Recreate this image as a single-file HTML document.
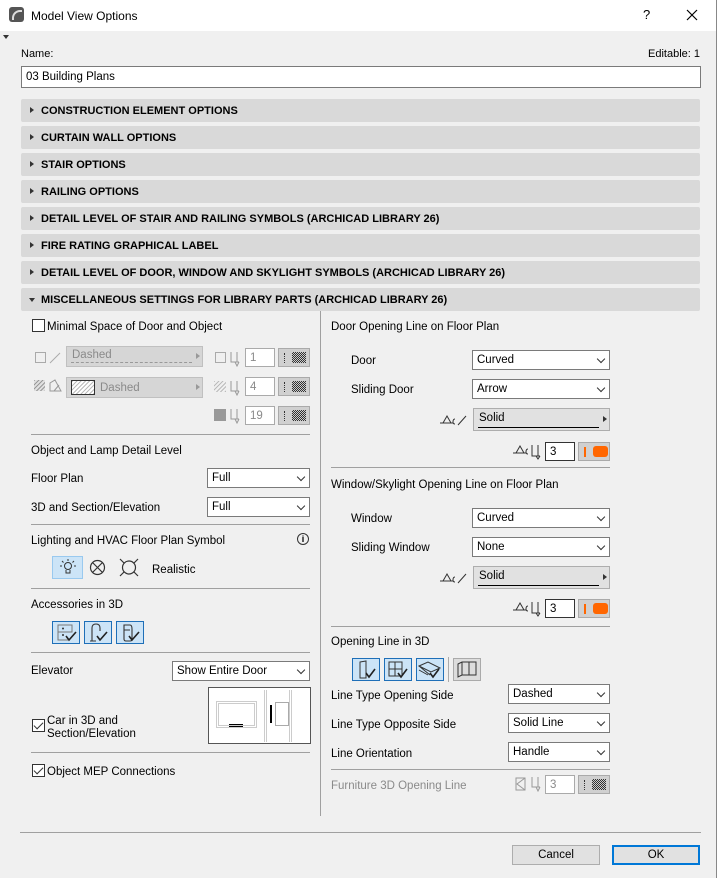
<!DOCTYPE html>
<html><head><meta charset="utf-8"><style>
*{box-sizing:border-box;margin:0;padding:0}
body{width:717px;height:878px;background:#f0f0f0;font-family:"Liberation Sans",sans-serif;font-size:11.5px;color:#000;position:relative;overflow:hidden}
.a{position:absolute}
.t{position:absolute;white-space:nowrap;line-height:14px}
.hdr{position:absolute;left:21px;width:679px;height:23px;background:#d9d9d9;border-radius:2px;font-weight:bold;font-size:11px;line-height:24px;padding-left:20px}
.hdr:before{content:"";position:absolute;left:9px;top:8px;border-left:4px solid #333;border-top:3.5px solid transparent;border-bottom:3.5px solid transparent}
.hdr.open:before{left:8px;top:10px;border-top:4px solid #333;border-left:3.5px solid transparent;border-right:3.5px solid transparent;border-bottom:none}
.dd{position:absolute;background:#fff;border:1px solid #7a7a7a;height:20px;line-height:19px;padding-left:4px}
.dd:after{content:"";position:absolute;right:5px;top:5px;width:5px;height:5px;border-right:1px solid #333;border-bottom:1px solid #333;transform:rotate(45deg)}
.hl{position:absolute;height:1px;background:#a0a0a0}
.inp{position:absolute;background:#fff;border:1px solid #aaa;height:19px;line-height:18px;padding-left:4px}
.sw{position:absolute;width:32px;height:19px;background:#d0d0d0;border:1px solid #aaa}
.sw i{position:absolute;left:13px;top:3px;width:14px;height:11px;background:repeating-conic-gradient(#333 0 25%,#ccc 0 50%) 0 0/2px 2px}
.sw b{position:absolute;left:5px;top:4px;width:1px;height:10px;border-left:1px dotted #333}
.swo i{background:#f60;border-radius:3px;left:14px;top:3px;width:15px;height:11px}
.swo b{border-left:2px solid #f60;left:5px}
.cb{position:absolute;width:13px;height:13px;border:1px solid #333;background:#fff}
.cb.on:after{content:"";position:absolute;left:3px;top:0px;width:4px;height:8px;border-right:1.5px solid #333;border-bottom:1.5px solid #333;transform:rotate(45deg)}
.ib{position:absolute;width:29px;height:23px;border:1px solid #1e6fb8;background:#cce4f7}
.gray{color:#8a8a8a}
.btn{position:absolute;height:20px;background:#e1e1e1;border:1px solid #adadad;text-align:center;line-height:18px}
svg{position:absolute}
</style></head><body>
<div class="a" style="left:0;top:0;width:717px;height:31px;background:#fff"></div>
<div class="a" style="left:9px;top:7px;width:15px;height:15px;background:#555;border-radius:3px"></div>
<div class="a" style="left:12px;top:10px;width:10px;height:10px;border:2px solid #ddd;border-right:none;border-bottom:none;border-radius:8px 0 0 0"></div>
<div class="t" style="left:31px;top:9px;font-size:12px">Model View Options</div>
<div class="t" style="left:643px;top:8px;font-size:13px">?</div>
<svg style="left:686px;top:9px" width="12" height="12"><path d="M1 1L11 11M11 1L1 11" stroke="#000" stroke-width="1.2"/></svg>
<div class="a" style="left:716px;top:0;width:1px;height:878px;background:#888"></div>
<div class="a" style="left:3px;top:35px;border-top:4px solid #333;border-left:3px solid transparent;border-right:3px solid transparent"></div>

<div class="t" style="left:21px;top:47px;font-size:11px">Name:</div>
<div class="t" style="left:648px;top:47px;font-size:11px">Editable: 1</div>
<div class="a" style="left:21px;top:66px;width:680px;height:22px;background:#fff;border:1px solid #7a7a7a;padding-left:4px;line-height:21px">03 Building Plans</div>

<div class="hdr" style="top:99px">CONSTRUCTION ELEMENT OPTIONS</div>
<div class="hdr" style="top:126px">CURTAIN WALL OPTIONS</div>
<div class="hdr" style="top:153px">STAIR OPTIONS</div>
<div class="hdr" style="top:180px">RAILING OPTIONS</div>
<div class="hdr" style="top:207px">DETAIL LEVEL OF STAIR AND RAILING SYMBOLS (ARCHICAD LIBRARY 26)</div>
<div class="hdr" style="top:234px">FIRE RATING GRAPHICAL LABEL</div>
<div class="hdr" style="top:261px">DETAIL LEVEL OF DOOR, WINDOW AND SKYLIGHT SYMBOLS (ARCHICAD LIBRARY 26)</div>
<div class="hdr open" style="top:288px">MISCELLANEOUS SETTINGS FOR LIBRARY PARTS (ARCHICAD LIBRARY 26)</div>

<!-- left column -->
<div class="cb" style="left:32px;top:319px"></div>
<div class="t" style="left:47px;top:320px">Minimal Space of Door and Object</div>
<div class="a" style="left:35px;top:352px;width:11px;height:11px;border:1px solid #aaa"></div>
<svg style="left:49px;top:352px" width="12" height="12"><path d="M1 11L11 1" stroke="#aaa"/></svg>
<div class="a" style="left:66px;top:346px;width:137px;height:21px;background:#d6d6d6;border:1px solid #c0c0c0;color:#8a8a8a;padding-left:5px;line-height:17px">Dashed<div class="a" style="left:4px;right:10px;top:15px;border-top:1px dashed #999"></div></div>
<div class="a" style="left:196px;top:353px;border-left:4px solid #999;border-top:3px solid transparent;border-bottom:3px solid transparent"></div>
<div class="a" style="left:215px;top:352px;width:11px;height:11px;border:1px solid #aaa"></div>
<svg style="left:229px;top:351px" width="12" height="16"><path d="M2 1V11H10M8 1V11M6 11L8 15L10 11" stroke="#999" fill="none"/></svg>
<div class="inp gray" style="left:245px;top:348px;width:30px">1</div>
<div class="sw" style="left:278px;top:348px"><b></b><i></i></div>

<div class="a" style="left:34px;top:380px;width:11px;height:11px;background:repeating-linear-gradient(135deg,#999 0 1px,#e0e0e0 1px 3px)"></div>
<svg style="left:49px;top:379px" width="13" height="13"><path d="M1 12V4L6 1L12 12ZM5 12L10 6" stroke="#999" fill="none"/></svg>
<div class="a" style="left:66px;top:377px;width:137px;height:21px;background:#d6d6d6;border:1px solid #c0c0c0;color:#8a8a8a;padding-left:33px;line-height:20px">Dashed</div>
<div class="a" style="left:71px;top:380px;width:24px;height:15px;border:1px solid #333;background:repeating-linear-gradient(135deg,#bbb 0 1px,#fff 1px 3px)"></div>
<div class="a" style="left:196px;top:384px;border-left:4px solid #999;border-top:3px solid transparent;border-bottom:3px solid transparent"></div>
<div class="a" style="left:214px;top:381px;width:12px;height:11px;background:repeating-linear-gradient(135deg,#bbb 0 1px,transparent 1px 3px)"></div>
<svg style="left:229px;top:380px" width="12" height="16"><path d="M2 1V11H10M8 1V11M6 11L8 15L10 11" stroke="#999" fill="none"/></svg>
<div class="inp gray" style="left:245px;top:377px;width:30px">4</div>
<div class="sw" style="left:278px;top:377px"><b></b><i></i></div>
<div class="a" style="left:214px;top:409px;width:12px;height:12px;background:#999"></div>
<svg style="left:229px;top:408px" width="12" height="16"><path d="M2 1V11H10M8 1V11M6 11L8 15L10 11" stroke="#999" fill="none"/></svg>
<div class="inp gray" style="left:245px;top:406px;width:30px">19</div>
<div class="sw" style="left:278px;top:406px"><b></b><i></i></div>
<div class="hl" style="left:31px;top:434px;width:279px"></div>

<div class="t" style="left:31px;top:444px">Object and Lamp Detail Level</div>
<div class="t" style="left:31px;top:472px">Floor Plan</div>
<div class="dd" style="left:207px;top:468px;width:103px">Full</div>
<div class="t" style="left:31px;top:501px">3D and Section/Elevation</div>
<div class="dd" style="left:207px;top:497px;width:103px">Full</div>
<div class="hl" style="left:31px;top:524px;width:279px"></div>

<div class="t" style="left:31px;top:534px">Lighting and HVAC Floor Plan Symbol</div>
<div class="a" style="left:297px;top:533px;width:12px;height:12px;border:1px solid #333;border-radius:50%;font-size:9px;text-align:center;line-height:11px;font-weight:bold">i</div>
<div class="a" style="left:52px;top:556px;width:31px;height:23px;background:#cce4f7;border:1px solid #99c9ef"></div>
<svg style="left:59px;top:558px" width="18" height="18"><circle cx="9" cy="8" r="3.5" fill="none" stroke="#333"/><path d="M7 12V15H11V12M9 1V3M3 3L4.5 4.5M15 3L13.5 4.5M1 8H3M15 8H17" stroke="#333" fill="none"/></svg>
<svg style="left:89px;top:559px" width="17" height="17"><circle cx="8.5" cy="8.5" r="7" fill="none" stroke="#333" stroke-width="1.2"/><path d="M3.5 3.5L13.5 13.5M13.5 3.5L3.5 13.5" stroke="#333" stroke-width="1.2"/></svg>
<svg style="left:119px;top:558px" width="20" height="19"><circle cx="10" cy="9.5" r="6.5" fill="none" stroke="#333" stroke-width="1.2"/><path d="M1 1L5 5M19 1L15 5M1 18L5 14M19 18L15 14" stroke="#333" stroke-width="1.2"/></svg>
<div class="t" style="left:152px;top:563px">Realistic</div>
<div class="hl" style="left:31px;top:588px;width:279px"></div>

<div class="t" style="left:31px;top:598px">Accessories in 3D</div>
<div class="ib" style="left:52px;top:621px;width:28px"></div>
<div class="ib" style="left:84px;top:621px;width:28px"></div>
<div class="ib" style="left:116px;top:621px;width:28px"></div>
<svg style="left:52px;top:621px" width="28" height="23"><path d="M6 4H20V11H6ZM6 11V19H16" stroke="#777" fill="none"/><circle cx="11" cy="7.5" r="1" fill="#333"/><circle cx="11" cy="14" r="1" fill="#333"/><path d="M14 15L17 19L24 11" stroke="#222" stroke-width="1.6" fill="none"/></svg>
<svg style="left:84px;top:621px" width="28" height="23"><path d="M8 20V7Q8 3 12 3Q16 3 16 7V10M6 20H12" stroke="#333" fill="none" stroke-width="1.1"/><path d="M13 15L16 19L23 11" stroke="#222" stroke-width="1.6" fill="none"/></svg>
<svg style="left:116px;top:621px" width="28" height="23"><path d="M8 4H14Q16 4 16 8V18Q16 20 14 20H10Q8 20 8 18ZM8 9H14" stroke="#333" fill="none" stroke-width="1.1"/><path d="M13 15L16 19L23 11" stroke="#222" stroke-width="1.6" fill="none"/></svg>
<div class="hl" style="left:31px;top:652px;width:279px"></div>

<div class="t" style="left:31px;top:664px">Elevator</div>
<div class="dd" style="left:172px;top:661px;width:138px">Show Entire Door</div>
<div class="a" style="left:208px;top:687px;width:103px;height:57px;background:#fff;border:1px solid #555"></div>
<div class="a" style="left:216px;top:701px;width:41px;height:27px;border:3px double #ccc"></div>
<div class="a" style="left:229px;top:724px;width:14px;height:3px;border-top:1px solid #000;border-bottom:1px solid #000"></div>
<div class="a" style="left:264px;top:690px;width:28px;height:52px;border-left:3px double #ccc;border-right:3px double #ccc"></div>
<div class="a" style="left:275px;top:702px;width:14px;height:24px;border:1px solid #aaa"></div>
<div class="a" style="left:270px;top:705px;width:2px;height:18px;background:#000"></div>
<div class="cb on" style="left:32px;top:719px"></div>
<div class="t" style="left:47px;top:714px">Car in 3D and</div>
<div class="t" style="left:47px;top:727px">Section/Elevation</div>
<div class="hl" style="left:31px;top:752px;width:279px"></div>
<div class="cb on" style="left:32px;top:764px"></div>
<div class="t" style="left:47px;top:765px">Object MEP Connections</div>

<div class="a" style="left:320px;top:311px;width:1px;height:505px;background:#a0a0a0"></div>

<!-- right column -->
<div class="t" style="left:331px;top:320px">Door Opening Line on Floor Plan</div>
<div class="t" style="left:351px;top:354px">Door</div>
<div class="dd" style="left:472px;top:350px;width:138px">Curved</div>
<div class="t" style="left:351px;top:383px">Sliding Door</div>
<div class="dd" style="left:472px;top:379px;width:138px">Arrow</div>
<svg style="left:439px;top:413px" width="30" height="14"><path d="M1 10H4M4 10L8 3L12 10H4M12 10H14M16 6Q14 6 14 9Q14 11 16 11M19 12L27 3" stroke="#333" fill="none"/></svg>
<div class="a" style="left:473px;top:408px;width:137px;height:23px;background:#e1e1e1;border:1px solid #adadad;padding-left:5px;line-height:18px">Solid<div class="a" style="left:4px;right:10px;top:18px;height:1px;background:#000"></div></div>
<div class="a" style="left:603px;top:416px;border-left:4px solid #333;border-top:3px solid transparent;border-bottom:3px solid transparent"></div>
<svg style="left:512px;top:444px" width="32" height="16"><path d="M1 9H4M4 9L8 2L12 9H4M12 9H14M16 5Q14 5 14 8Q14 10 16 10M20 1V12H28M26 1V12M24 12L26 15L28 12" stroke="#333" fill="none"/></svg>
<div class="inp" style="left:545px;top:442px;width:30px;border-color:#333">3</div>
<div class="sw swo" style="left:578px;top:442px"><b></b><i></i></div>
<div class="hl" style="left:331px;top:467px;width:279px"></div>

<div class="t" style="left:331px;top:478px">Window/Skylight Opening Line on Floor Plan</div>
<div class="t" style="left:351px;top:512px">Window</div>
<div class="dd" style="left:472px;top:508px;width:138px">Curved</div>
<div class="t" style="left:351px;top:541px">Sliding Window</div>
<div class="dd" style="left:472px;top:537px;width:138px">None</div>
<svg style="left:439px;top:571px" width="30" height="14"><path d="M1 10H4M4 10L8 3L12 10H4M12 10H14M16 6Q14 6 14 9Q14 11 16 11M19 12L27 3" stroke="#333" fill="none"/></svg>
<div class="a" style="left:473px;top:566px;width:137px;height:23px;background:#e1e1e1;border:1px solid #adadad;padding-left:5px;line-height:18px">Solid<div class="a" style="left:4px;right:10px;top:18px;height:1px;background:#000"></div></div>
<div class="a" style="left:603px;top:574px;border-left:4px solid #333;border-top:3px solid transparent;border-bottom:3px solid transparent"></div>
<svg style="left:512px;top:601px" width="32" height="16"><path d="M1 9H4M4 9L8 2L12 9H4M12 9H14M16 5Q14 5 14 8Q14 10 16 10M20 1V12H28M26 1V12M24 12L26 15L28 12" stroke="#333" fill="none"/></svg>
<div class="inp" style="left:545px;top:599px;width:30px;border-color:#333">3</div>
<div class="sw swo" style="left:578px;top:599px"><b></b><i></i></div>
<div class="hl" style="left:331px;top:626px;width:279px"></div>

<div class="t" style="left:331px;top:635px">Opening Line in 3D</div>
<div class="ib" style="left:352px;top:658px;width:28px"></div>
<div class="ib" style="left:384px;top:658px;width:28px"></div>
<div class="ib" style="left:416px;top:658px;width:28px"></div>
<svg style="left:352px;top:658px" width="28" height="23"><path d="M8 4L14 3V20L8 20Z" stroke="#333" fill="none"/><path d="M14 15L17 19L23 11" stroke="#222" stroke-width="1.6" fill="none"/></svg>
<svg style="left:384px;top:658px" width="28" height="23"><path d="M5 4H18V18H5ZM11 4V18M5 11H18" stroke="#333" fill="none"/><path d="M14 15L17 19L23 11" stroke="#222" stroke-width="1.6" fill="none"/></svg>
<svg style="left:416px;top:658px" width="28" height="23"><path d="M3 8L12 4L24 10L15 14ZM3 8L14 17M3 12L12 17" stroke="#333" fill="none"/><path d="M14 15L17 19L23 11" stroke="#222" stroke-width="1.6" fill="none"/></svg>
<div class="a" style="left:448px;top:657px;width:1px;height:25px;background:#aaa"></div>
<div class="a" style="left:453px;top:658px;width:28px;height:23px;background:#ddd;border:1px solid #aaa"></div>
<svg style="left:453px;top:658px" width="28" height="23"><path d="M5 6L9 4H23V17L9 17L5 19ZM9 4V17M16 4V17" stroke="#333" fill="none"/></svg>
<div class="t" style="left:331px;top:689px">Line Type Opening Side</div>
<div class="dd" style="left:508px;top:684px;width:102px">Dashed</div>
<div class="t" style="left:331px;top:718px">Line Type Opposite Side</div>
<div class="dd" style="left:508px;top:713px;width:102px">Solid Line</div>
<div class="t" style="left:331px;top:747px">Line Orientation</div>
<div class="dd" style="left:508px;top:742px;width:102px">Handle</div>
<div class="hl" style="left:331px;top:769px;width:279px"></div>
<div class="t gray" style="left:331px;top:779px">Furniture 3D Opening Line</div>
<svg style="left:515px;top:777px" width="12" height="14"><path d="M1 1H10V13H1ZM10 1L2 7L10 13" stroke="#999" fill="none"/></svg>
<svg style="left:530px;top:776px" width="12" height="16"><path d="M2 1V11H10M8 1V11M6 11L8 15L10 11" stroke="#999" fill="none"/></svg>
<div class="inp gray" style="left:545px;top:775px;width:30px">3</div>
<div class="sw" style="left:578px;top:775px"><b></b><i></i></div>

<div class="hl" style="left:20px;top:832px;width:681px"></div>
<div class="btn" style="left:512px;top:845px;width:88px;line-height:19px">Cancel</div>
<div class="btn" style="left:612px;top:845px;width:88px;border:2px solid #0078d7;line-height:17px">OK</div>
</body></html>
